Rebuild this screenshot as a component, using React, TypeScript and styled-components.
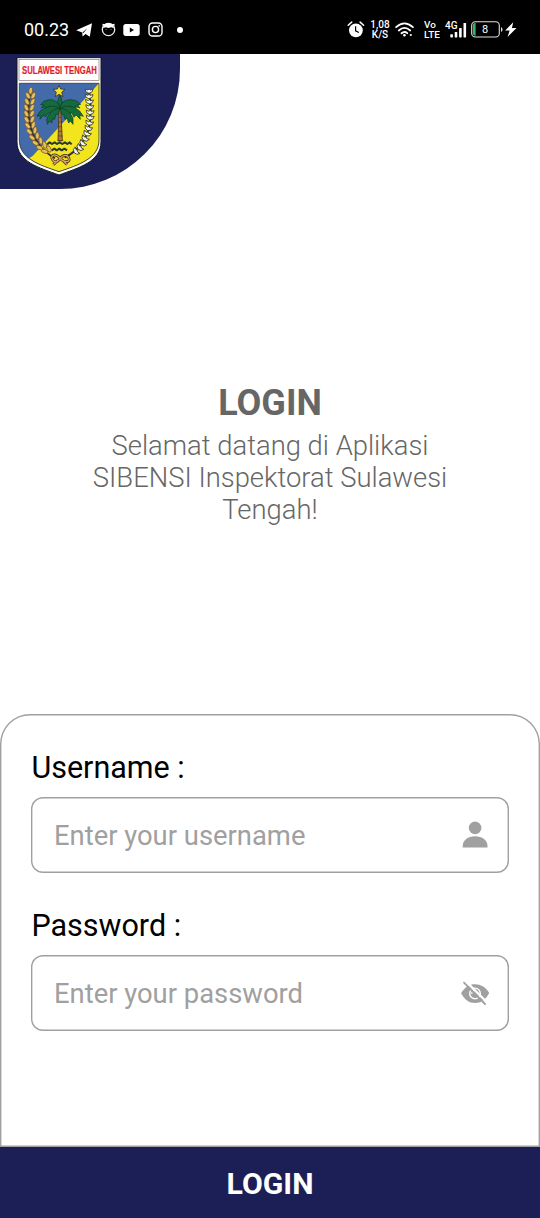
import React from "react";
import styled, { createGlobalStyle } from "styled-components";

const NAVY = "#1b1f56";
const LINE = "#a0a0a0";

const GlobalStyle = createGlobalStyle`
  *, *::before, *::after { box-sizing: border-box; }
  html, body { margin: 0; padding: 0; background: #fff; }
  body { font-family: Roboto, "Liberation Sans", sans-serif; }
`;

const Screen = styled.div`
  width: 540px;
  height: 1218px;
  display: flex;
  flex-direction: column;
  background: #fff;
  overflow: hidden;
`;

const StatusBar = styled.div`
  height: 54px;
  flex: none;
  display: flex;
  align-items: center;
  justify-content: space-between;
  padding: 5px 23px 0 24px;
  background: #000;
  color: #fff;
`;

const StatusGroup = styled.div`
  display: flex;
  align-items: center;
`;

const Slot = styled.span<{ $gap: number }>`
  display: flex;
  margin-left: ${(p) => p.$gap}px;
  svg { display: block; overflow: visible; }
`;

const Clock = styled.span`
  width: 45px;
  font-size: 18px;
  line-height: 20px;
  white-space: nowrap;
`;

const Stack = styled.span<{ $gap: number; $width: number; $size: number }>`
  margin-left: ${(p) => p.$gap}px;
  width: ${(p) => p.$width}px;
  display: flex;
  flex-direction: column;
  align-items: center;
  font-size: ${(p) => p.$size}px;
  line-height: 10px;
  font-weight: 500;
  white-space: nowrap;
`;

const StackLine = styled.span<{ $start?: boolean }>`
  align-self: ${(p) => (p.$start ? "flex-start" : "center")};
`;

const Corner = styled.header`
  width: 180px;
  height: 135px;
  flex: none;
  padding: 3px 0 0 16px;
  background: ${NAVY};
  border-bottom-right-radius: 120px;
  svg { display: block; overflow: visible; }
`;

const Welcome = styled.section`
  flex: 1;
  display: flex;
  flex-direction: column;
  align-items: center;
  padding-top: 193px;
  color: #666;
  text-align: center;
`;

const Title = styled.h1`
  margin: 0;
  font-size: 36px;
  line-height: 42px;
  font-weight: 700;
`;

const Subtitle = styled.p`
  margin: 6px 0 0;
  width: 380px;
  font-size: 27.4px;
  line-height: 32px;
  font-weight: 300;
`;

const Card = styled.form`
  height: 433px;
  flex: none;
  padding: 35px 31.4px 0;
  box-shadow: inset 0 0 0 1.4px ${LINE};
  border-radius: 30px 30px 0 0;
`;

const Field = styled.div`
  margin-bottom: 34px;
`;

const Label = styled.label`
  display: block;
  height: 48px;
  padding-top: 1px;
  font-size: 30.5px;
  line-height: 36px;
  color: #000;
`;

const InputBox = styled.div`
  height: 76px;
  display: flex;
  align-items: center;
  box-shadow: inset 0 0 0 1.4px ${LINE};
  border-radius: 12px;
  padding: 0 17.5px 0 22.6px;
  svg { display: block; flex: none; }
`;

const Input = styled.input`
  flex: 1;
  min-width: 0;
  padding: 2px 0 0;
  border: 0;
  outline: 0;
  background: transparent;
  font-family: inherit;
  font-size: 27.4px;
  line-height: 34px;
  color: #000;
  &::placeholder { color: #a0a0a0; opacity: 1; }
`;

const Submit = styled.button`
  height: 71px;
  flex: none;
  border: 0;
  padding: 1px 0 0;
  background: ${NAVY};
  color: #fff;
  font-family: inherit;
  font-size: 30.2px;
  font-weight: 700;
`;

const Telegram = () => (
  <svg width="17" height="14" viewBox="0 0 17 14">
    <path d="M.2 7.3 16 .3 13.8 13.7 9.6 11 6.6 13.4 6.2 9.6Z" fill="#fff" />
    <path d="M6.4 9.4 11.4 5.3 7.4 10Z" fill="#000" />
  </svg>
);

const FaceIcon = () => (
  <svg width="15" height="15" viewBox="0 0 15 15">
    <circle cx="7.5" cy="7.5" r="6.2" fill="none" stroke="#eee" strokeWidth="1.3" />
    <path d="M2 6.2C2.8 2.6 5 1 7.5 1s4.7 1.6 5.5 5.2L10.2 5.2 7.5 5.9 4.8 5.2Z" fill="#fff" />
    <path d="M1.5 4.2V1.8L4.4 2.2ZM13.5 4.2V1.8L10.6 2.2Z" fill="#fff" />
    <path d="M4.3 7.5h1.4M9.3 7.5h1.4" fill="none" stroke="#777" strokeWidth=".8" />
  </svg>
);

const YouTube = () => (
  <svg width="17" height="12" viewBox="0 0 17 12">
    <rect x=".3" y=".1" width="16.4" height="11.8" rx="2.6" fill="#fff" />
    <path d="M6.8 3.5 11 6 6.8 8.5Z" fill="#000" />
  </svg>
);

const Instagram = () => (
  <svg width="15" height="15" viewBox="0 0 15 15" fill="none" stroke="#fff" strokeWidth="1.4">
    <rect x="1" y="1" width="13" height="13" rx="3.6" />
    <circle cx="7.5" cy="7.5" r="3.1" />
    <circle cx="11.2" cy="3.9" r=".8" fill="#fff" stroke="none" />
  </svg>
);

const Dot = () => (
  <svg width="6" height="6" viewBox="0 0 6 6"><circle cx="3" cy="3" r="3" fill="#fff" /></svg>
);

const Alarm = () => (
  <svg width="17" height="17" viewBox="0 0 17 17">
    <circle cx="7.9" cy="9.3" r="6.9" fill="#fff" />
    <path d="M.2 4.2 3.7 1.1M15.6 4.2 12.1 1.1" stroke="#fff" strokeWidth="1.5" strokeLinecap="round" />
    <path d="M7.6 5.2V9.8L10.8 11.5" fill="none" stroke="#000" strokeWidth="1.2" />
  </svg>
);

const Wifi = () => (
  <svg width="19" height="15" viewBox="0 0 19 15" fill="none" stroke="#fff" strokeWidth="1.8" strokeLinecap="round">
    <path d="M1.1 5.2Q9.5-2.5 17.9 5.2M3.8 8.5Q9.5 3.2 15.2 8.5M6.5 11.3Q9.5 8.7 12.3 11.2" />
    <circle cx="9.4" cy="13.2" r="1.3" fill="#fff" stroke="none" />
    <circle cx="15.8" cy="13" r="1.1" fill="#fff" stroke="none" />
  </svg>
);

const Signal = () => (
  <svg width="22" height="18" viewBox="0 0 22 18" fill="#fff">
    <text x="0" y="7.8" fontSize="10" fontWeight="500">4G</text>
    <rect x="5.3" y="13.2" width="2.6" height="3.2" rx=".6" />
    <rect x="9.7" y="10.9" width="2.6" height="5.5" rx=".6" />
    <rect x="14.1" y="6.9" width="2.6" height="9.5" rx=".6" />
    <rect x="18.5" y="2" width="2.6" height="14.4" rx=".6" />
  </svg>
);

const Battery = () => (
  <svg width="32" height="17" viewBox="0 0 32 17">
    <rect x=".7" y=".8" width="27.6" height="15.2" rx="3.6" fill="none" stroke="#e2e2e2" strokeWidth="1.1" />
    <path d="M4.6 2v12.8H4A2.2 2.2 0 0 1 1.9 12.6V4.2A2.2 2.2 0 0 1 4 2Z" fill="#35b56a" />
    <path d="M30 6v5q1.5-.7 1.5-2.5T30 6" fill="#ddd" />
    <text x="14.1" y="12.2" fontSize="11" fill="#fff" textAnchor="middle">8</text>
  </svg>
);

const Bolt = () => (
  <svg width="12" height="16" viewBox="0 0 12 16">
    <path d="M8.3.3.2 8.4h4.4L2.6 15 11.5 6H6.9Z" fill="#fff" />
  </svg>
);

const UserIcon = () => (
  <svg width="32" height="32" viewBox="0 0 32 32" fill="#a0a0a0">
    <circle cx="16.1" cy="8.9" r="6.3" />
    <path d="M3.7 28.6V27C3.7 21.3 8.9 17.2 16.1 17.2S28.5 21.3 28.5 27V28.6Z" />
  </svg>
);

const HiddenIcon = () => (
  <svg width="32" height="32" viewBox="0 0 32 32">
    <path d="M2 16.2C6 9.8 10.4 7.2 16 7.2s10.5 2.7 14.2 8.7C26.5 22.7 22 25.9 16 25.9S5.7 22.9 2 16.2Z" fill="#a0a0a0" />
    <circle cx="16" cy="16.4" r="5.3" fill="#a0a0a0" stroke="#fff" strokeWidth="1.4" />
    <path d="M12.7 16.9q.2-3.4 3.6-3.6" fill="none" stroke="#fff" strokeWidth="1.3" />
    <path d="m6.7 4.1 21.2 21.2" stroke="#fff" strokeWidth="2.2" />
    <path d="m5 5.6 21 21.4" stroke="#a0a0a0" strokeWidth="1.8" strokeLinecap="round" />
  </svg>
);

/* Wheat grains: centre x, centre y, rotation */
const grains: Array<[number, number, number]> = [
  [92, 122, 8], [84, 137, -28], [100, 137, 28], [81, 155, -28], [98, 155, 28],
  [79, 173, -28], [96, 173, 28], [79, 191, -30], [96, 191, 28], [80, 209, -35],
  [97, 208, 22], [83, 227, -40], [100, 225, 15], [88, 245, -45], [105, 241, 10],
  [96, 263, -50], [112, 257, 0], [106, 279, -55], [122, 272, -8],
  [119, 293, -65], [134, 285, -15], [134, 304, -72], [147, 297, -25],
];

/* Cotton tufts along the right stem: centre x, centre y, rotation */
const tufts: Array<[number, number, number]> = [
  [267, 123, 0], [267, 139, 2], [268, 155, 4], [269, 171, 4], [270, 187, 4],
  [270, 203, 8], [268, 219, 14], [265, 235, 20], [261, 251, 28], [255, 266, 34],
  [248, 280, 42], [239, 293, 48], [228, 304, 55],
];

const Emblem = () => (
  <svg width="86" height="119" viewBox="48 21 258 357" role="img" aria-label="Sulawesi Tengah">
    <defs>
      <clipPath id="shield">
        <path d="M58 100H297V270C297 326 235 345 177 365C119 345 58 326 58 270Z" />
      </clipPath>
    </defs>
    <path d="M51 23H303V275C303 336 236 353 177 375C118 353 51 336 51 275Z" fill="#fff" stroke="#15171f" strokeWidth="3" />
    <rect x="57" y="29" width="240" height="63" fill="#fff" stroke="#6d4850" strokeWidth="1.6" />
    <text x="0" y="0" transform="translate(66 71) scale(.745 1)" fontFamily="Liberation Sans, sans-serif" fontWeight="700" fontSize="31" fill="#e3192b" stroke="#e3192b" strokeWidth=".6">SULAWESI TENGAH</text>
    <g clipPath="url(#shield)">
      <rect x="55" y="98" width="245" height="270" fill="#436ba9" />
      <path d="M298 99V368H55V345L98 318Z" fill="#f2e51d" />
    </g>
    <path d="M58 100H297V270C297 326 235 345 177 365C119 345 58 326 58 270Z" fill="none" stroke="#292c38" strokeWidth="2.5" />
    <path d="M91 126C78 190 82 278 165 325" fill="none" stroke="#3a2b1b" strokeWidth="5" />
    {grains.map(([x, y, r]) => (
      <ellipse key={`${x}-${y}`} cx={x} cy={y} rx="5.6" ry="10.5" transform={`rotate(${r} ${x} ${y})`} fill="#e8bd5c" stroke="#6b5226" strokeWidth="2" />
    ))}
    <path d="M267 119C277 190 282 277 194 323" fill="none" stroke="#333" strokeWidth="6" />
    {tufts.map(([x, y, r]) => (
      <g key={`${x}-${y}`} transform={`translate(${x} ${y}) rotate(${r})`}>
        <path d="M0 7-9 3-12-6-4-3 0-6 4-3 12-6 9 3Z" fill="#f6f6f0" stroke="#33362f" strokeWidth="2.4" />
      </g>
    ))}
    <path d="m174 272 3-98h5l5 98Z" fill="#b87832" stroke="#473419" strokeWidth="2.5" />
    <path d="M172 272H190M174 258H188M175 244H187M176 230H186M177 216H185M177 202H184" stroke="#473419" strokeWidth="1.8" />
    <g fill="#156b3c" stroke="#0a3b24" strokeWidth="2" strokeLinejoin="round">
      <path d="M180 171C172 150 151 143 130 155L122 164 131 164 124 174 136 169 135 178 149 168 157 174 163 168 170 177Z" />
      <path d="M180 170C188 148 210 145 232 154L242 163 232 164 240 174 225 169 222 178 212 168 203 175 197 168 188 177Z" />
      <path d="M179 175C158 161 133 173 120 184L111 199 121 196 120 208 132 194 136 201 145 188 153 194 159 183 169 187Z" />
      <path d="M181 175C202 161 224 171 239 183L250 199 239 196 241 208 228 195 222 202 215 188 206 194 198 182 190 187Z" />
      <path d="M179 175C158 176 144 192 140 209L142 223 149 213 155 219 158 206 164 208 167 194 175 193Z" />
      <path d="M181 175C200 177 215 190 219 207L219 223 211 213 206 219 201 205 195 208 191 194 184 192Z" />
      <path d="m180 171-8-16 8-21 7 22Z" />
    </g>
    <path d="m177 106 5 11 13 1-10 9 4 13-12-7-11 7 3-13-10-9 13-1Z" fill="#f4df24" stroke="#30302a" strokeWidth="2.5" />
    <path d="M141 283 149 277 156 282 164 277 171 282 179 277 187 282 195 277 202 282 209 277 215 283M155 301 163 296 170 301 178 296 185 301 193 296 201 301" fill="none" stroke="#28382a" strokeWidth="6" strokeLinejoin="round" />
    <path d="M181 325C165 308 150 315 157 328S174 336 181 325 202 312 207 325 190 338 181 325M174 331 160 344M188 331 201 344" fill="none" stroke="#3c281b" strokeWidth="8" />
    <path d="M181 325C165 308 150 315 157 328S174 336 181 325 202 312 207 325 190 338 181 325M174 331 160 344M188 331 201 344" fill="none" stroke="#dfaa6c" strokeWidth="3.8" />
  </svg>
);

export default function App() {
  return (
    <>
      <GlobalStyle />
      <Screen>
        <StatusBar>
          <StatusGroup>
            <Clock>00.23</Clock>
            <Slot $gap={7}><Telegram /></Slot>
            <Slot $gap={8}><FaceIcon /></Slot>
            <Slot $gap={7}><YouTube /></Slot>
            <Slot $gap={8}><Instagram /></Slot>
            <Slot $gap={14}><Dot /></Slot>
          </StatusGroup>
          <StatusGroup>
            <Slot $gap={0}><Alarm /></Slot>
            <Stack $gap={5} $width={20} $size={10}>
              <StackLine>1,08</StackLine>
              <StackLine>K/S</StackLine>
            </Stack>
            <Slot $gap={5}><Wifi /></Slot>
            <Stack $gap={10} $width={16} $size={9.9}>
              <StackLine $start>Vo</StackLine>
              <StackLine $start>LTE</StackLine>
            </Stack>
            <Slot $gap={5}><Signal /></Slot>
            <Slot $gap={4}><Battery /></Slot>
            <Slot $gap={2}><Bolt /></Slot>
          </StatusGroup>
        </StatusBar>
        <Corner><Emblem /></Corner>
        <Welcome>
          <Title>LOGIN</Title>
          <Subtitle>Selamat datang di Aplikasi SIBENSI Inspektorat Sulawesi Tengah!</Subtitle>
        </Welcome>
        <Card id="login" onSubmit={(e) => e.preventDefault()}>
          <Field>
            <Label htmlFor="username">Username :</Label>
            <InputBox>
              <Input id="username" placeholder="Enter your username" />
              <UserIcon />
            </InputBox>
          </Field>
          <Field>
            <Label htmlFor="password">Password :</Label>
            <InputBox>
              <Input id="password" type="password" placeholder="Enter your password" />
              <HiddenIcon />
            </InputBox>
          </Field>
        </Card>
        <Submit type="submit" form="login">LOGIN</Submit>
      </Screen>
    </>
  );
}
